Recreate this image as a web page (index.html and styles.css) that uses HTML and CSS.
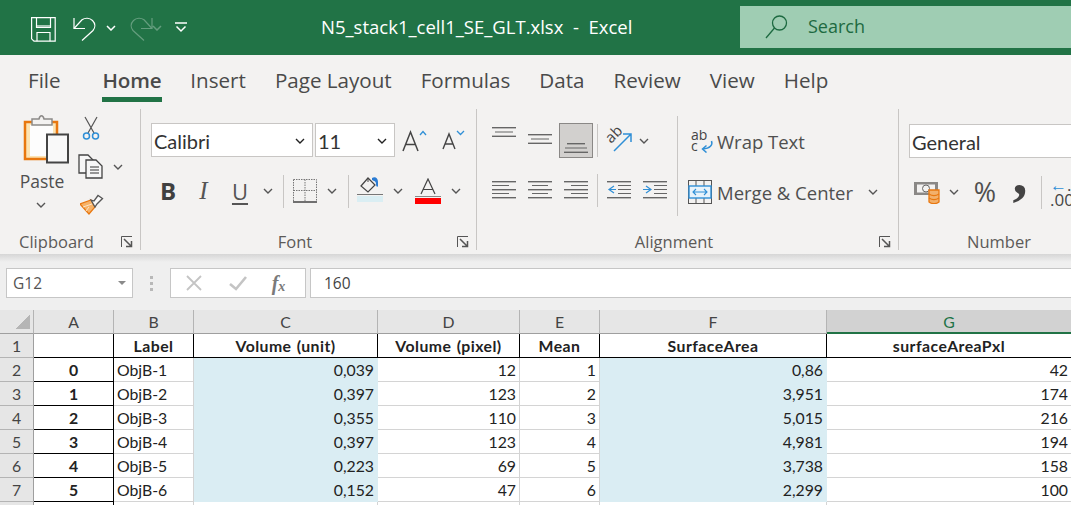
FILE: index.html
```html
<!DOCTYPE html>
<html lang="en">
<head>
<meta charset="utf-8">
<title>N5_stack1_cell1_SE_GLT.xlsx - Excel</title>
<link rel="stylesheet" href="styles.css">
</head>
<body>
<header class="titlebar">
  <div class="qat">
    <svg class="q-save" viewBox="0 0 25 25" fill="none" stroke="#fff" stroke-width="1.2"><path d="M.6.6H24.2V24.2H3L.6 21.8Z"/><path d="M5.5.6V10.5H19.5V.6"/><path d="M6 24.2V15.5H19V24.2"/><path d="M6 9H19" /></svg>
    <svg class="q-undo" viewBox="0 0 23 24" fill="none" stroke="#fff" stroke-width="1.2"><path d="M1 1V11.5H12"/><path d="M1 11.5L9 2.8C12 .6 16.500.6 19.500 3.500C22.500 6.500 22.500 10.500 20 13.500L9 23.500"/></svg>
    <svg class="q-chev" viewBox="0 0 10 6" fill="none" stroke="#fff" stroke-width="1.500"><path d="M1 1L5 5L9 1"/></svg>
    <svg class="q-redo" viewBox="0 0 23 24" fill="none" stroke="#fff" stroke-width="1.2"><path d="M22 1V11.5H11"/><path d="M22 11.500L14 2.800C11 .6 6.500 .6 3.500 3.500C.5 6.500 .5 10.500 3 13.500L14 23.500"/></svg>
    <svg class="q-chev q-dim" viewBox="0 0 10 6" fill="none" stroke="#fff" stroke-width="1.500"><path d="M1 1L5 5L9 1"/></svg>
    <svg class="q-more" viewBox="0 0 12 11" fill="none" stroke="#fff" stroke-width="1.500"><path d="M0 1H12"/><path d="M1.500 4.500L6 9L10.500 4.500"/></svg>
  </div>
  <div class="doc-title">N5_stack1_cell1_SE_GLT.xlsx&nbsp; -&nbsp; Excel</div>
  <div class="search">
    <svg class="s-icon" viewBox="0 0 23 24" fill="none" stroke="#1d6a41" stroke-width="1.300"><circle cx="14.500" cy="8" r="7"/><path d="M9.500 13L1 23"/></svg>
    <span>Search</span>
  </div>
</header>

<nav class="tabs">
  <span class="tab t-file">File</span>
  <span class="tab active">Home</span>
  <span class="tab">Insert</span>
  <span class="tab">Page Layout</span>
  <span class="tab">Formulas</span>
  <span class="tab">Data</span>
  <span class="tab">Review</span>
  <span class="tab">View</span>
  <span class="tab">Help</span>
</nav>

<section class="ribbon">
  <div class="group g-clip">
    <div class="g-body clip-body">
      <div class="paste">
        <svg class="i-paste" viewBox="0 0 46 50"><rect x="2" y="8" width="32" height="37" fill="#fce4b4" stroke="#e8770f" stroke-width="2.500"/><rect x="7" y="11" width="23" height="31" fill="#fdfdfd"/><path d="M9 11V5H16C17 .8 20 .8 21 5H29V11Z" fill="#f3f2f1" stroke="#8c8a88" stroke-width="1.500"/><rect x="24" y="20.500" width="21" height="28" fill="#f9f9f9" stroke="#444" stroke-width="2"/></svg>
        <span class="paste-t">Paste</span>
        <svg class="chev" viewBox="0 0 10 6"><path d="M1 1L5 5L9 1"/></svg>
      </div>
      <div class="clip-small">
        <svg class="i-cut" viewBox="0 0 18 25" fill="none"><path d="M3 1L12 17M15 1L6 17" stroke="#555" stroke-width="1.200"/><circle cx="4.500" cy="20" r="3" stroke="#2f8fd6" stroke-width="1.500"/><circle cx="13.500" cy="20" r="3" stroke="#2f8fd6" stroke-width="1.500"/></svg>
        <div class="copy-row">
          <svg class="i-copy" viewBox="0 0 25 25" fill="#f7f7f7" stroke="#444" stroke-width="1.300"><path d="M1 1H10L15 6V19H1Z"/><path d="M8 6H18L24 12V24H8Z"/><path d="M12 13H21M12 16H21M12 19H21" stroke="#777"/></svg>
          <svg class="chev" viewBox="0 0 10 6"><path d="M1 1L5 5L9 1"/></svg>
        </div>
        <svg class="i-brush" viewBox="0 0 24 21"><path d="M0 10L11 6L15 13L9 20Z" fill="#f7b267" stroke="#e8770f" stroke-width="1.200"/><path d="M3 13L12 10M6 17L9 13" stroke="#fbe3c5" stroke-width="1"/><path d="M11 6L14 7L18 1.500L22.500 4.500L17 10L15 13Z" fill="#fafafa" stroke="#555" stroke-width="1.300"/></svg>
      </div>
    </div>
    <div class="g-label"><span></span><span>Clipboard</span><svg class="launch" viewBox="0 0 12 12" fill="none" stroke="#555"><path d="M.5 11V.5H11"/><path d="M3 3L10 10M5 10.500H10.500V5" stroke-width="1.500"/></svg></div>
  </div>

  <div class="group g-font">
    <div class="g-body font-body">
      <div class="font-r1">
        <div class="select"><span>Calibri</span><svg class="chev dark" viewBox="0 0 10 6"><path d="M1 1L5 5L9 1"/></svg></div>
        <div class="select"><span>11</span><svg class="chev dark" viewBox="0 0 10 6"><path d="M1 1L5 5L9 1"/></svg></div>
        <svg class="i-agrow" viewBox="0 0 25 23" fill="none"><path d="M1 22L8.500 3L16 22M3.500 15.500H13.500" stroke="#444" stroke-width="1.500"/><path d="M18 6L21 2.500L24 6" stroke="#2f8fd6" stroke-width="1.300"/></svg>
        <svg class="i-ashrink" viewBox="0 0 23 20" fill="none"><path d="M1 19L7 4L13 19M3 14H11" stroke="#444" stroke-width="1.400"/><path d="M15 1L18.500 4.500L22 1" stroke="#2f8fd6" stroke-width="1.300"/></svg>
      </div>
      <div class="font-r2">
        <b class="f-b">B</b>
        <i class="f-i">I</i>
        <span class="f-u">U</span>
        <svg class="chev" viewBox="0 0 10 6"><path d="M1 1L5 5L9 1"/></svg>
        <span class="vsep"></span>
        <svg class="i-border" viewBox="0 0 24 24" fill="none" stroke="#777" stroke-width="1" stroke-dasharray="1.500 1"><path d="M.5.5H23.500V22.500M.5.5V22.500M12 .5V22.500M.5 11.500H23.500"/><path d="M0 23H24" stroke="#444" stroke-width="1.500" stroke-dasharray="none"/></svg>
        <svg class="chev" viewBox="0 0 10 6"><path d="M1 1L5 5L9 1"/></svg>
        <span class="vsep"></span>
        <svg class="i-fill" viewBox="0 0 26 27"><path d="M4 10L11 2L18 9L11 16Z" fill="none" stroke="#444" stroke-width="1.200"/><path d="M11 2L11 6" stroke="#444"/><path d="M15 2C18 0 21 2 21 6V10C20 12 19 10 19 8C19 5 17 5 15 4Z" fill="#2b7cd3"/><rect y="18" width="26" height="1" fill="#777"/><rect y="20" width="26" height="6" fill="#daeef3"/></svg>
        <svg class="chev" viewBox="0 0 10 6"><path d="M1 1L5 5L9 1"/></svg>
        <svg class="i-color" viewBox="0 0 26 26"><path d="M6 16L13 1L20 16M8 11.500H18" fill="none" stroke="#444" stroke-width="1.200"/><rect y="18" width="26" height="1" fill="#888"/><rect y="20" width="26" height="6" fill="#f00"/></svg>
        <svg class="chev" viewBox="0 0 10 6"><path d="M1 1L5 5L9 1"/></svg>
      </div>
    </div>
    <div class="g-label"><span></span><span>Font</span><svg class="launch" viewBox="0 0 12 12" fill="none" stroke="#555"><path d="M.5 11V.5H11"/><path d="M3 3L10 10M5 10.500H10.500V5" stroke-width="1.500"/></svg></div>
  </div>

  <div class="group g-align">
    <div class="g-body align-body">
      <div class="al-left">
        <div class="al-r1">
          <svg class="i-v v-top" viewBox="0 0 24 10" fill="#666"><rect y="0" width="24" height="1.400"/><rect x="3" y="4.500" width="18" height="1"/><rect y="8.600" width="24" height="1.400"/></svg>
          <svg class="i-v v-mid" viewBox="0 0 24 10" fill="#666"><rect y="0" width="24" height="1.400"/><rect x="3" y="4.500" width="18" height="1"/><rect y="8.600" width="24" height="1.400"/></svg>
          <span class="al-sel"><svg class="i-v" viewBox="0 0 24 10" fill="#666"><rect x="3" y="0" width="18" height="1.400"/><rect x="1" y="4.500" width="22" height="1"/><rect y="8.600" width="24" height="1.400"/></svg></span>
          <span class="vsep"></span>
          <svg class="i-orient" viewBox="0 0 24 24" fill="none"><text class="o-text" transform="translate(3 15) rotate(-45)">ab</text><path d="M6 22L23 5M15 5H23V13" stroke="#2f8fd6" stroke-width="1.500"/></svg>
          <svg class="chev" viewBox="0 0 10 6"><path d="M1 1L5 5L9 1"/></svg>
        </div>
        <div class="al-r2">
          <svg class="i-al" viewBox="0 0 24 18" fill="#666"><rect y="0" width="24" height="1.400"/><rect y="4" width="17" height="1"/><rect y="8" width="24" height="1.400"/><rect y="12" width="17" height="1"/><rect y="16" width="24" height="1.400"/></svg>
          <svg class="i-al" viewBox="0 0 24 18" fill="#666"><rect y="0" width="24" height="1.400"/><rect x="4" y="4" width="16" height="1"/><rect y="8" width="24" height="1.400"/><rect x="4" y="12" width="16" height="1"/><rect y="16" width="24" height="1.400"/></svg>
          <svg class="i-al" viewBox="0 0 24 18" fill="#666"><rect y="0" width="24" height="1.400"/><rect x="7" y="4" width="17" height="1"/><rect y="8" width="24" height="1.400"/><rect x="7" y="12" width="17" height="1"/><rect y="16" width="24" height="1.400"/></svg>
          <span class="vsep"></span>
          <svg class="i-al" viewBox="0 0 24 18"><g fill="#666"><rect y="0" width="24" height="1.400"/><rect x="11" y="4" width="13" height="1"/><rect x="11" y="8" width="13" height="1"/><rect x="11" y="12" width="13" height="1"/><rect y="16" width="24" height="1.400"/></g><path d="M7 5L2 8.500L7 12M2 8.500H9" fill="none" stroke="#2f8fd6" stroke-width="1.200"/></svg>
          <svg class="i-al" viewBox="0 0 24 18"><g fill="#666"><rect y="0" width="24" height="1.400"/><rect x="11" y="4" width="13" height="1"/><rect x="11" y="8" width="13" height="1"/><rect x="11" y="12" width="13" height="1"/><rect y="16" width="24" height="1.400"/></g><path d="M3 5L8 8.500L3 12M0 8.500H8" fill="none" stroke="#2f8fd6" stroke-width="1.200"/></svg>
        </div>
      </div>
      <span class="al-divider"></span>
      <div class="al-right">
        <div class="wrap-row">
          <svg class="i-wrap" viewBox="0 0 23 23" fill="none"><text class="w-text" x="0" y="10">ab</text><text class="w-text" x="0" y="21">c</text><path d="M20.500 11C22 15 19 18.500 12 19" stroke="#2f8fd6" stroke-width="1.500"/><path d="M15.500 15.500L11.500 19L15.500 22.500" stroke="#2f8fd6" stroke-width="1.500"/></svg>
          <span class="al-text">Wrap Text</span>
        </div>
        <div class="merge-row">
          <svg class="i-merge" viewBox="0 0 24 24" fill="none"><rect x=".5" y=".5" width="23" height="23" stroke="#555"/><path d="M8 .5V6M16 .5V6M8 18V23.500M16 18V23.500" stroke="#555"/><rect x="1" y="6" width="22" height="12" stroke="#2f8fd6" stroke-width="1.400" fill="#e8f3fb"/><path d="M5 12H19M8 9L5 12L8 15M16 9L19 12L16 15" stroke="#2f8fd6" stroke-width="1.100"/></svg>
          <span class="al-text">Merge &amp; Center</span>
          <svg class="chev" viewBox="0 0 10 6"><path d="M1 1L5 5L9 1"/></svg>
        </div>
      </div>
    </div>
    <div class="g-label"><span></span><span>Alignment</span><svg class="launch" viewBox="0 0 12 12" fill="none" stroke="#555"><path d="M.5 11V.5H11"/><path d="M3 3L10 10M5 10.500H10.500V5" stroke-width="1.500"/></svg></div>
  </div>

  <div class="group g-num">
    <div class="g-body num-body">
      <div class="select num-select"><span>General</span></div>
      <div class="num-r2">
        <svg class="i-money" viewBox="0 0 26 23"><rect x="0" y="1" width="24" height="13" fill="#8a8886"/><rect x="3" y="3.500" width="18" height="8" fill="#f3f2f1"/><circle cx="12" cy="7.500" r="3.500" fill="none" stroke="#666"/><path d="M15 9H25V21C22 23 18 23 15 21Z" fill="#f2b06b" stroke="#e8770f" stroke-width="1.300"/><path d="M15 13C18 15 22 15 25 13M15 17C18 19 22 19 25 17" fill="none" stroke="#e8770f" stroke-width="1.200"/></svg>
        <svg class="chev" viewBox="0 0 10 6"><path d="M1 1L5 5L9 1"/></svg>
        <span class="n-pct">%</span>
        <span class="n-comma">,</span>
        <span class="vsep"></span>
        <span class="n-dec"><span class="n-dec-1"><em>←</em>.0</span><span class="n-dec-2">.00</span></span>
      </div>
    </div>
    <div class="g-label g-label-num">Number</div>
  </div>
</section>

<section class="formula">
  <div class="namebox"><span>G12</span><i class="tri"></i></div>
  <div class="grip"><i></i><i></i><i></i></div>
  <div class="fx-btns">
    <svg class="fx-x" viewBox="0 0 16 16" fill="none" stroke="#c4c4c4" stroke-width="1.800"><path d="M1 1L15 15M15 1L1 15"/></svg>
    <svg class="fx-c" viewBox="0 0 18 15" fill="none" stroke="#c4c4c4" stroke-width="2.600"><path d="M1 8L7 13L17 1"/></svg>
    <span class="fx-f">f<sub>x</sub></span>
  </div>
  <div class="fbar">160</div>
</section>

<section class="sheet">
  <div class="corner"><i></i></div>
  <div class="ch">A</div><div class="ch">B</div><div class="ch">C</div><div class="ch">D</div><div class="ch">E</div><div class="ch">F</div><div class="ch ch-sel">G</div>

  <div class="rh">1</div>
  <div class="c idx"></div><div class="c h">Label</div><div class="c h">Volume (unit)</div><div class="c h">Volume (pixel)</div><div class="c h">Mean</div><div class="c h">SurfaceArea</div><div class="c h last">surfaceAreaPxl</div>

  <div class="rh">2</div>
  <div class="c idx">0</div><div class="c lbl">ObjB-1</div><div class="c num fill">0,039</div><div class="c num">12</div><div class="c num">1</div><div class="c num fill">0,86</div><div class="c num last">42</div>
  <div class="rh">3</div>
  <div class="c idx">1</div><div class="c lbl">ObjB-2</div><div class="c num fill">0,397</div><div class="c num">123</div><div class="c num">2</div><div class="c num fill">3,951</div><div class="c num last">174</div>
  <div class="rh">4</div>
  <div class="c idx">2</div><div class="c lbl">ObjB-3</div><div class="c num fill">0,355</div><div class="c num">110</div><div class="c num">3</div><div class="c num fill">5,015</div><div class="c num last">216</div>
  <div class="rh">5</div>
  <div class="c idx">3</div><div class="c lbl">ObjB-4</div><div class="c num fill">0,397</div><div class="c num">123</div><div class="c num">4</div><div class="c num fill">4,981</div><div class="c num last">194</div>
  <div class="rh">6</div>
  <div class="c idx">4</div><div class="c lbl">ObjB-5</div><div class="c num fill">0,223</div><div class="c num">69</div><div class="c num">5</div><div class="c num fill">3,738</div><div class="c num last">158</div>
  <div class="rh">7</div>
  <div class="c idx">5</div><div class="c lbl">ObjB-6</div><div class="c num fill">0,152</div><div class="c num">47</div><div class="c num">6</div><div class="c num fill">2,299</div><div class="c num last">100</div>
  <div class="rh"></div>
  <div class="c idx"></div><div class="c lbl"></div><div class="c num"></div><div class="c num"></div><div class="c num"></div><div class="c num"></div><div class="c num last"></div>
</section>
</body>
</html>
```

FILE: styles.css
```css
* { box-sizing: border-box; }
html, body { margin: 0; height: 505px; overflow: hidden; background: #fff; }
body { width: 1071px; font-family: "Open Sans", "Noto Sans", sans-serif; color: #444; }
svg { display: block; flex: none; }

/* title bar */
.titlebar { height: 55px; background: #217346; color: #fff; display: flex; align-items: center; }
.qat { width: 321px; flex: none; display: grid; grid-template-columns: 73px 33px 24px 22px 23px 12px; height: 55px; align-items: center; }
.q-save { margin-left: 31px; margin-top: 3px; width: 25px; height: 25px; }
.q-undo { width: 23px; height: 24px; margin-top: 3px; }
.q-chev { width: 10px; height: 6px; }
.q-redo { width: 23px; height: 24px; margin-top: 3px; opacity: .3; }
.q-dim { opacity: .3; }
.q-more { width: 12px; height: 11px; margin-top: -1px; }
.doc-title { font-size: 18.500px; margin-top: -3px; white-space: nowrap; }
.search { margin-left: auto; width: 331px; height: 42px; margin-top: -2px; background: #9fcdb3; display: flex; align-items: center; padding-left: 25px; color: #1d6a41; font-size: 18px; gap: 20px; }
.search span { margin-top: -2px; }
.s-icon { width: 23px; height: 24px; }

/* tabs */
.tabs { height: 45px; background: #f3f2f1; display: flex; padding-left: 28px; gap: 29px; align-items: flex-start; font-size: 20.600px; color: #4a4a4a; }
.tab { height: 47px; padding-top: 10px; line-height: 30px; white-space: nowrap; }
.t-file { margin-right: 13px; }
.active { font-weight: 600; position: relative; letter-spacing: -.2px; }
.active::after { content: ""; position: absolute; left: -1px; right: -1px; top: 42px; height: 5px; background: #217346; }

/* ribbon */
.ribbon { height: 154px; background: #f3f2f1; display: flex; padding-top: 9px; }
.group { height: 141px; display: flex; flex-direction: column; border-right: 1px solid #c8c6c4; flex: none; }
.g-clip { width: 141px; }
.g-font { width: 336px; }
.g-align { width: 422px; }
.g-num { flex: 1; border-right: 0; min-width: 0; }
.g-body { flex: 1; display: flex; min-height: 0; }
.g-label { height: 20px; margin-bottom: -2px; display: grid; grid-template-columns: 1fr auto 1fr; align-items: center; font-size: 16.500px; line-height: 20px; color: #5c5a58; padding-right: 27px; }
.launch { width: 12px; height: 12px; justify-self: end; margin-right: -20px; }
.g-label-num { display: block; padding-left: 68px; padding-right: 0; }
.chev { width: 10px; height: 6px; fill: none; stroke: #555; stroke-width: 1.400; }
.dark { stroke: #222; }
.vsep { width: 1px; height: 33px; background: #c8c6c4; }

.paste { width: 68px; display: flex; flex-direction: column; align-items: center; padding-left: 14px; }
.i-paste { width: 46px; height: 50px; margin: 5px 0 0 9px; flex: none; }
.paste-t { font-size: 17.500px; line-height: 24px; margin-top: 5px; margin-left: 2px; color: #4f4f4f; }
.paste .chev { margin-top: 9px; }
.clip-small { display: flex; flex-direction: column; align-items: flex-start; padding: 7px 0 0 10px; }
.i-cut { width: 18px; height: 25px; margin-left: 4px; }
.copy-row { display: flex; align-items: center; gap: 10px; margin-top: 13px; }
.i-copy { width: 25px; height: 25px; }
.i-brush { width: 24px; height: 21px; margin: 15px 0 0 2px; }

.font-body { flex-direction: column; padding: 14px 0 0 10px; gap: 17px; }
.font-r1 { display: grid; grid-template-columns: 162px 80px 38px 38px; column-gap: 2px; align-items: center; justify-items: center; height: 34px; }
.select { width: 100%; height: 34px; background: #fff; border: 1px solid #c8c6c4; display: flex; align-items: center; justify-content: space-between; padding: 2px 7px 0 2px; font-family: Lato, sans-serif; font-size: 20px; color: #333; }
.i-agrow { width: 25px; height: 23px; margin-right: 4px; }
.i-ashrink { width: 23px; height: 20px; margin-right: 6px; }
.font-r2 { display: grid; grid-template-columns: 34px 37px 36px 20px 10px 33px 22px 10px 34px 22px 38px 18px; height: 34px; align-items: center; justify-items: center; }
.f-b { font-family: "Open Sans", sans-serif; font-size: 24px; font-weight: 700; color: #404040; line-height: 30px; }
.f-i { font-family: "Liberation Serif", serif; font-size: 25px; color: #555; line-height: 30px; }
.f-u { font-family: "Open Sans", sans-serif; font-size: 22px; color: #555; line-height: 30px; text-decoration: underline; text-decoration-thickness: 1.500px; text-underline-offset: 3px; }
.i-border { width: 24px; height: 24px; }
.i-fill { width: 26px; height: 27px; margin-top: -3px; }
.i-color { width: 26px; height: 26px; }

.align-body { padding: 0 0 0 9px; }
.al-left { width: 191px; flex: none; padding-top: 14px; }
.al-r1 { display: grid; grid-template-columns: 36px 36px 36px 6px 40px 8px; height: 35px; align-items: center; justify-items: center; }
.al-r2 { display: grid; grid-template-columns: 36px 36px 36px 6px 37px 36px; height: 34px; margin-top: 15px; align-items: center; justify-items: center; }
.i-al { width: 24px; height: 18px; }
.i-v { width: 24px; height: 10px; }
.v-top { align-self: start; margin-top: 4px; }
.v-mid { align-self: start; margin-top: 11px; }
.al-sel { width: 34px; height: 35px; background: #d2d0ce; border: 1px solid #8a8886; display: flex; align-items: flex-end; justify-content: center; padding-bottom: 4px; }
.i-orient { width: 24px; height: 24px; overflow: visible; }
.o-text { font-family: "Open Sans", sans-serif; font-size: 15px; fill: #444; }
.al-divider { width: 1px; height: 100px; background: #c8c6c4; margin-top: 7px; flex: none; }
.al-right { flex: 1; font-size: 18.500px; color: #4f4f4f; padding: 14px 0 0 10px; }
.wrap-row { height: 36px; display: flex; align-items: center; padding-left: 3px; }
.i-wrap { width: 23px; height: 23px; margin-right: 3px; }
.w-text { font-family: "Open Sans", sans-serif; font-size: 14px; fill: #444; }
.al-text { white-space: nowrap; }
.merge-row { height: 36px; margin-top: 15px; display: flex; align-items: center; }
.i-merge { width: 24px; height: 24px; margin-right: 5px; }
.merge-row .chev { margin-left: 15px; }

.num-body { flex-direction: column; padding: 15px 0 0 10px; }
.num-select { height: 34px; flex: none; border-right: 0; }
.num-r2 { display: grid; grid-template-columns: 36px 18px 44px 26px 16px 1fr; height: 34px; margin-top: 17px; align-items: center; justify-items: center; }
.i-money { width: 26px; height: 23px; }
.n-pct { font-size: 27px; line-height: 34px; color: #4f4f4f; }
.n-comma { font-family: "Liberation Serif", serif; font-size: 60px; font-weight: 700; line-height: 34px; height: 34px; margin-top: -36px; color: #444; }
.n-dec { display: flex; flex-direction: column; font-size: 17px; line-height: 15px; justify-self: start; margin-left: 1px; width: 22px; overflow: hidden; }
.n-dec-1 em { font-style: normal; color: #2f8fd6; }
.n-dec-1, .n-dec-2 { white-space: nowrap; }

/* formula bar */
.formula { height: 56px; background: linear-gradient(#d6d6d6, #efefef 8px); display: flex; padding: 14px 0 12px 6px; }
.namebox { width: 127px; height: 30px; background: #fff; border: 1px solid #c6c6c6; display: flex; align-items: center; justify-content: space-between; padding: 0 6px; font-size: 15.500px; color: #555; }
.tri { width: 0; height: 0; border: 4px solid transparent; border-top: 4px solid #8a8a8a; border-bottom: 0; }
.grip { width: 37px; display: flex; flex-direction: column; align-items: center; justify-content: center; gap: 3px; }
.grip i { width: 3px; height: 3px; background: #b8b8b8; }
.fx-btns { width: 136px; height: 30px; background: #fff; border: 1px solid #c6c6c6; display: grid; grid-template-columns: 44px 45px 1fr; align-items: center; justify-items: center; }
.fx-x { width: 16px; height: 16px; margin-left: 1px; }
.fx-c { width: 18px; height: 15px; }
.fx-f { font-family: "Liberation Serif", serif; font-style: italic; font-weight: 700; font-size: 20px; color: #7a7a7a; line-height: 20px; margin-left: -8px; }
.fx-f sub { font-size: 14px; vertical-align: -1px; line-height: 0; }
.fbar { flex: 1; margin-left: 4px; height: 30px; background: #fff; border: 1px solid #c6c6c6; border-right: 0; padding-left: 13px; line-height: 29px; font-size: 15.500px; color: #444; }

/* sheet */
.sheet { display: grid; grid-template-columns: 34px 80px 80px 184px 142px 80px 227px 244px; grid-auto-rows: 24px; font-family: Lato, sans-serif; font-size: 15.800px; color: #222; }
.corner { background: #e6e6e6; border-right: 1px solid #b4b4b4; border-bottom: 1px solid #9f9f9f; position: relative; }
.corner i { position: absolute; left: 15px; top: 4px; width: 15px; height: 15px; background: linear-gradient(135deg, transparent 50%, #b5b5b5 50%); }
.ch { background: #e6e6e6; border-right: 1px solid #b4b4b4; border-bottom: 1px solid #9f9f9f; text-align: center; line-height: 23px; color: #444; }
.ch-sel { background: #d2d2d2; color: #217346; border-right: 0; border-bottom: 2px solid #217346; }
.rh { background: #e6e6e6; border-right: 1px solid #9f9f9f; border-bottom: 1px solid #b4b4b4; text-align: center; line-height: 23px; color: #444; }
.c { border-right: 1px solid #d4d4d4; border-bottom: 1px solid #d4d4d4; line-height: 23px; padding: 0 3px; white-space: nowrap; overflow: hidden; }
.h { font-weight: 700; text-align: center; border-right: 1px solid #000; border-bottom: 1px solid #000; letter-spacing: .45px; word-spacing: 1px; }
.rh + .idx { border-right: 1px solid #000; border-bottom: 1px solid #000; text-align: center; font-weight: 700; }
.num { text-align: right; }
.fill { background: #daedf3; border-color: #daedf3; }
.last { border-right: 0; }
```
